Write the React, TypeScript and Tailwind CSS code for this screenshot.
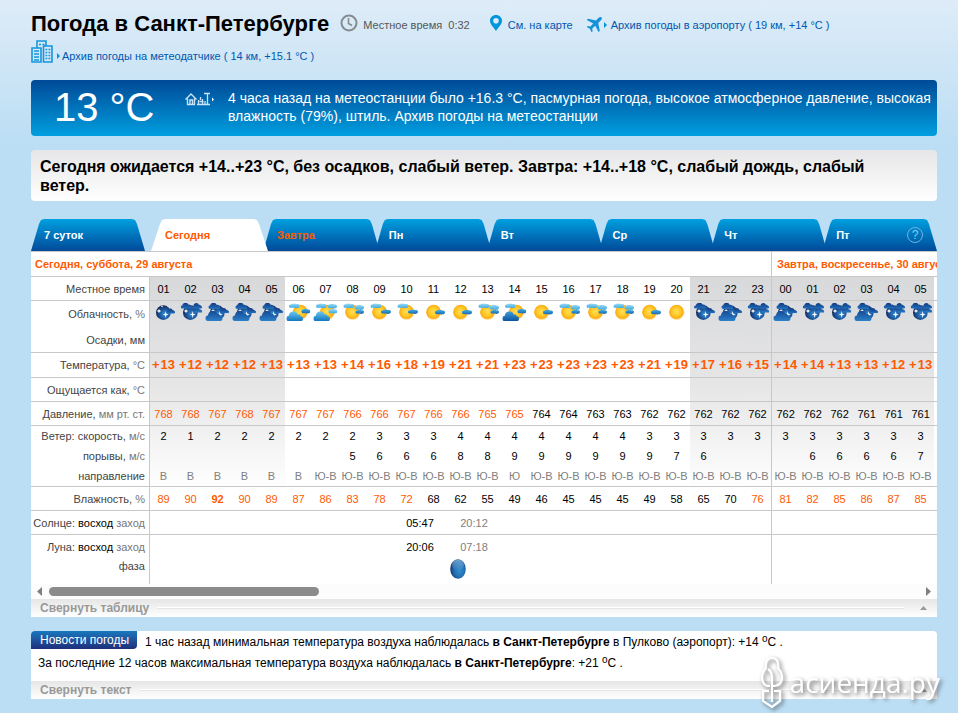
import { clsx } from 'clsx';

type Sky =
  | 'nightFew'
  | 'nightPartly'
  | 'nightCloudy'
  | 'nightHigh'
  | 'sun'
  | 'sunFew'
  | 'sunHigh'
  | 'sunPartly'
  | 'sunLow'
  | 'sunLowHigh'
  | 'sunDark';

interface Hour {
  hour: string;
  sky: Sky;
  temp: number;
  pressure: number;
  wind: number;
  gust?: number;
  dir: string;
  humidity: number;
}

const row = (
  hour: string,
  sky: Sky,
  temp: number,
  pressure: number,
  wind: number,
  gust: number | undefined,
  dir: string,
  humidity: number,
): Hour => ({ hour, sky, temp, pressure, wind, gust, dir, humidity });

const today: Hour[] = [
  row('01', 'nightFew', 13, 768, 2, undefined, 'В', 89),
  row('02', 'nightPartly', 12, 768, 1, undefined, 'В', 90),
  row('03', 'nightCloudy', 12, 767, 2, undefined, 'В', 92),
  row('04', 'nightCloudy', 12, 768, 2, undefined, 'В', 90),
  row('05', 'nightCloudy', 13, 767, 2, undefined, 'В', 89),
  row('06', 'sunLow', 13, 767, 2, undefined, 'В', 87),
  row('07', 'sunLowHigh', 13, 767, 2, undefined, 'Ю-В', 86),
  row('08', 'sunPartly', 14, 766, 2, 5, 'Ю-В', 83),
  row('09', 'sunHigh', 16, 766, 3, 6, 'Ю-В', 78),
  row('10', 'sunHigh', 18, 767, 3, 6, 'Ю-В', 72),
  row('11', 'sunFew', 19, 766, 3, 6, 'Ю-В', 68),
  row('12', 'sunFew', 21, 766, 4, 8, 'Ю-В', 62),
  row('13', 'sunPartly', 21, 765, 4, 8, 'Ю-В', 55),
  row('14', 'sunDark', 23, 765, 4, 9, 'Ю', 49),
  row('15', 'sunFew', 23, 764, 4, 9, 'Ю-В', 46),
  row('16', 'sunPartly', 23, 764, 4, 9, 'Ю-В', 45),
  row('17', 'sunPartly', 23, 763, 4, 9, 'Ю-В', 45),
  row('18', 'sunPartly', 23, 763, 4, 9, 'Ю-В', 45),
  row('19', 'sunFew', 21, 762, 3, 9, 'Ю-В', 49),
  row('20', 'sun', 19, 762, 3, 7, 'Ю-В', 58),
  row('21', 'nightHigh', 17, 762, 3, 6, 'Ю-В', 65),
  row('22', 'nightCloudy', 16, 762, 3, undefined, 'Ю-В', 70),
  row('23', 'nightPartly', 15, 762, 3, undefined, 'Ю-В', 76),
];

const tomorrow: Hour[] = [
  row('00', 'nightCloudy', 14, 762, 3, undefined, 'Ю-В', 81),
  row('01', 'nightPartly', 14, 762, 3, 6, 'Ю-В', 82),
  row('02', 'nightPartly', 13, 762, 3, 6, 'Ю-В', 85),
  row('03', 'nightCloudy', 13, 761, 3, 6, 'Ю-В', 86),
  row('04', 'nightPartly', 12, 761, 3, 6, 'Ю-В', 87),
  row('05', 'nightPartly', 13, 761, 3, 7, 'Ю-В', 85),
];

const hours = [...today, ...tomorrow];

const tabs = ['Завтра', 'Пн', 'Вт', 'Ср', 'Чт', 'Пт'];

const Cloud = ({ x, y, w, h, fill }: { x: number; y: number; w: number; h: number; fill: string }) => (
  <svg x={x} y={y} width={w} height={h} viewBox="0 0 60 30" preserveAspectRatio="none">
    <path
      d="M9 30C3 30 0 27 0 22c0-5 4-8 9-8C10 5 17 0 26 0c8 0 13 4 15 10 2-1 10-1 11 5 5 0 8 3 8 7 0 5-3 8-8 8z"
      fill={`url(#${fill})`}
    />
  </svg>
);

// Flat little cloud, almost a pill
const Wisp = ({ x, y, w, h, fill }: { x: number; y: number; w: number; h: number; fill: string }) => (
  <svg x={x} y={y} width={w} height={h} viewBox="0 0 60 30" preserveAspectRatio="none">
    <path
      d="M10 27C3 27 0 22 0 16 0 9 5 6 12 7 15 2 22 0 30 1c6 0 9 1 12 4 10-2 18 2 18 11 0 8-6 13-14 12-5 3-11 2-14-1z"
      fill={`url(#${fill})`}
    />
  </svg>
);

const SkyIcon = ({ sky }: { sky: Sky }) => {
  const night = sky.startsWith('night');
  const low = sky === 'sunLow' || sky === 'sunLowHigh' || sky === 'sunDark';
  return (
    <svg viewBox="0 0 81 60" className="mx-auto block h-5 w-[27px] overflow-hidden" role="img" aria-label={sky}>
      {night ? (
        <>
          <circle cx="40" cy="32" r="22" fill="url(#globe)" />
          <path
            d="M27 20l2 5 5 2-5 2-2 5-2-5-5-2 5-2zM36 9l1 3 3 1-3 1-1 3-1-3-3-1 3-1zM47 27l2 8 7 2.500-7 2.500-2 9-2-9-7-2.500 7-2.500z"
            fill="#fff"
          />
        </>
      ) : (
        <circle cx={low ? 46 : 41} cy="31" r="23" fill="url(#sunny)" />
      )}
      {sky === 'nightFew' && <Cloud x={50} y={19} w={25} h={16} fill="navy" />}
      {sky === 'nightPartly' && (
        <>
          <Cloud x={11} y={2} w={34} h={18} fill="navy" />
          <Cloud x={45} y={3} w={30} h={17} fill="navy" />
          <Cloud x={52} y={18} w={24} h={14} fill="steel" />
        </>
      )}
      {sky === 'nightHigh' && (
        <>
          <Cloud x={12} y={2} w={38} h={18} fill="navy" />
          <Cloud x={48} y={18} w={27} h={16} fill="navy" />
        </>
      )}
      {sky === 'nightCloudy' && (
        <>
          <Cloud x={13} y={2} w={36} h={19} fill="navy" />
          <Cloud x={48} y={18} w={27} h={16} fill="navy" />
          <Cloud x={4} y={26} w={52} h={31} fill="steel" />
        </>
      )}
      {sky === 'sunFew' && <Wisp x={45} y={23} w={30} h={15} fill="sea" />}
      {sky === 'sunHigh' && (
        <>
          <Wisp x={13} y={4} w={33} h={15} fill="pale" />
          <Wisp x={45} y={22} w={30} h={14} fill="sea" />
        </>
      )}
      {sky === 'sunPartly' && (
        <>
          <Wisp x={13} y={4} w={33} h={15} fill="pale" />
          <Wisp x={46} y={8} w={29} h={16} fill="pale" />
          <Wisp x={49} y={23} w={26} h={13} fill="sea" />
        </>
      )}
      {low && (
        <>
          <Wisp x={12} y={4} w={32} h={15} fill="pale" />
          {sky === 'sunLowHigh' && <Wisp x={46} y={5} w={29} h={15} fill="pale" />}
          <Wisp x={49} y={20} w={27} h={15} fill={sky === 'sunLowHigh' ? 'pale' : 'sea'} />
          <Cloud x={4} y={28} w={50} h={29} fill={sky === 'sunDark' ? 'deep' : 'blue'} />
        </>
      )}
    </svg>
  );
};

const IconDefs = () => (
  <svg className="absolute size-0" aria-hidden="true">
    <defs>
      <radialGradient id="sunny" cx="48%" cy="45%" r="52%">
        <stop offset="0" stopColor="#ffe05c" />
        <stop offset=".6" stopColor="#ffc51f" />
        <stop offset=".85" stopColor="#fbab1a" />
        <stop offset="1" stopColor="#ffe3a0" />
      </radialGradient>
      <radialGradient id="globe" cx="60%" cy="60%" r="60%">
        <stop offset="0" stopColor="#3a93d6" />
        <stop offset=".5" stopColor="#1f5ea6" />
        <stop offset="1" stopColor="#10275a" />
      </radialGradient>
      <radialGradient id="phase" cx="60%" cy="58%" r="62%">
        <stop offset="0" stopColor="#2f8fd0" />
        <stop offset=".5" stopColor="#2672b4" />
        <stop offset="1" stopColor="#12386f" />
      </radialGradient>
      <linearGradient id="phaseLight" x2="0" y2="1">
        <stop offset="0" stopColor="#8cc4ea" stopOpacity=".75" />
        <stop offset="1" stopColor="#8cc4ea" stopOpacity="0" />
      </linearGradient>
      <linearGradient id="navy" x2="0" y2="1">
        <stop offset="0" stopColor="#123c80" />
        <stop offset=".6" stopColor="#1a57a3" />
        <stop offset="1" stopColor="#2377c2" />
      </linearGradient>
      <linearGradient id="steel" x2="0" y2="1">
        <stop offset="0" stopColor="#174a90" />
        <stop offset=".5" stopColor="#2063ae" />
        <stop offset="1" stopColor="#2a80c8" />
      </linearGradient>
      <linearGradient id="blue" x2="0" y2="1">
        <stop offset="0" stopColor="#6cc9f0" />
        <stop offset="1" stopColor="#1376c0" />
      </linearGradient>
      <linearGradient id="sea" x2="0" y2="1">
        <stop offset="0" stopColor="#45b0e4" />
        <stop offset="1" stopColor="#1565af" />
      </linearGradient>
      <linearGradient id="deep" x2="0" y2="1">
        <stop offset="0" stopColor="#3fa0dc" />
        <stop offset="1" stopColor="#0b55a0" />
      </linearGradient>
      <linearGradient id="pale" x2="0" y2="1">
        <stop offset="0" stopColor="#9adcf6" />
        <stop offset="1" stopColor="#3aa5dd" />
      </linearGradient>
    </defs>
  </svg>
);

const Bullet = () => (
  <svg viewBox="0 0 3 6" className="h-1.5 w-[3px] shrink-0" aria-hidden="true">
    <path d="M0 0l3 3-3 3z" fill="#0096dc" />
  </svg>
);

const Header = () => (
  <header className="pt-2">
    <div className="flex h-[30px] items-center text-[11px] text-[#0058b0]">
      <h1 className="mr-[11px] whitespace-nowrap text-[22px] font-bold text-black">Погода в Санкт-Петербурге</h1>
      <svg viewBox="0 0 18 18" className="mr-[5px] size-[18px] shrink-0" fill="none" stroke="#868b90" aria-hidden="true">
        <circle cx="9" cy="9" r="7.5" strokeWidth="2" />
        <path d="M8.500 4v5.500l3.500 2" strokeWidth="1.600" />
      </svg>
      <span className="mt-1 whitespace-pre text-[#555]">Местное время  0:32</span>
      <a href="#map" className="ml-[19px] flex items-center whitespace-nowrap">
        <svg viewBox="0 0 14 18" className="mr-[5px] h-[18px] w-3.5" aria-hidden="true">
          <path
            d="M7 1C3.600 1 1 3.500 1 6.800 1 10.500 5 13.500 7 17c2-3.500 6-6.500 6-10.200C13 3.500 10.400 1 7 1zm0 3a2.800 2.800 0 1 1 0 5.600A2.800 2.800 0 0 1 7 4z"
            fill="#0095dc"
          />
        </svg>
        <span className="mt-1">См. на карте</span>
      </a>
      <a href="#airport" className="ml-[13px] flex items-center whitespace-nowrap">
        <svg viewBox="0 0 16 16" className="mt-1 mr-0.5 size-4" aria-hidden="true">
          <path
            d="M15.600.5c-.8-.8-2.200-.4-3.200.6L10 3.500 2 1.800.8 3l6.400 3.400L4.400 9.400l-2.600-.3-1 1 3 1.700 1.800 3.400 1-1-.3-2.700 3-2.800 3.200 6.300 1.300-1.200L12.200 6l2.500-2.400c1-1 1.600-2.300.9-3.100z"
            fill="#1593d8"
          />
        </svg>
        <span className="mt-1 flex items-center gap-1">
          <Bullet />
          Архив погоды в аэропорту ( 19 км, +14 °C )
        </span>
      </a>
    </div>
    <a href="#sensor" className="mt-0.5 flex h-6 w-fit items-end gap-1 text-[11px] leading-4 text-[#0058b0]">
      <svg viewBox="0 0 22 23" className="mb-px h-[23px] w-[22px]" fill="none" stroke="#1495dc" strokeWidth="1.600" aria-hidden="true">
        <path d="M1 22V8h9v14zM6 8V1h9v5M12.500 22V6H21v16z" />
        <path d="M3 11h5M3 14h5M3 17h5M3 20h5M14.500 9.500h1.800M17.500 9.500h1.800M14.500 12.500h1.800M17.500 12.500h1.800M14.500 15.500h1.800M17.500 15.500h1.800M14.500 18.500h1.800M17.500 18.500h1.800M8 4.500h2M11.500 4.500h2" />
      </svg>
      <span className="flex items-center gap-0.5">
        <Bullet />
        Архив погоды на метеодатчике ( 14 км, +15.1 °C )
      </span>
    </a>
  </header>
);

const CurrentWeather = () => (
  <section className="mt-4 flex h-14 items-start rounded bg-linear-to-b from-[#004a97] to-[#009fdf] text-white">
    <p className="w-[154px] shrink-0 pl-[23px] text-[40px] leading-[54px]">13 °C</p>
    <svg viewBox="0 0 30 14" className="mt-3 mr-[13px] h-3.5 w-[30px] shrink-0" fill="none" stroke="#c9e2f5" aria-hidden="true">
      <path d="M.5 7.500L6 2l5.500 5.500M2.500 6.500V12.500h7V6.500M5 12V8h2.500v4" strokeWidth="1.400" />
      <path d="M12 12.500h13M13.500 12V8M15.500 5v3M14.500 9.500h4M17.500 12V7M20 12V9M22.500 12V1.500M19 1.500h6" strokeWidth="1.300" />
      <path d="M27 5.500l2 2-2 2z" fill="#fff" stroke="none" />
    </svg>
    <p className="pt-[9px] text-[14px] leading-[18px]">
      4 часа назад на метеостанции было +16.3 °C, пасмурная погода, высокое атмосферное давление, высокая влажность (79%),
      штиль. <a href="#station">Архив погоды на метеостанции</a>
    </p>
  </section>
);

const Tabs = () => (
  <nav className="mt-[18px] flex h-8 text-[11px] font-bold text-white" role="tablist">
    <button
      role="tab"
      className="mr-1.5 w-[114px] bg-linear-to-b from-[#00a0e0] to-[#004a99] pl-[13px] text-left [clip-path:polygon(0_100%,8px_5px,10px_1px,13px_0,calc(100%-13px)_0,calc(100%-10px)_1px,calc(100%-8px)_5px,100%_100%)]"
    >
      7 суток
    </button>
    <button
      role="tab"
      aria-selected="true"
      className="z-10 -mr-[3px] w-[117px] bg-white pl-3.5 text-left text-[#ff5a00] [clip-path:polygon(0_100%,9px_5px,11px_1px,14px_0,calc(100%-14px)_0,calc(100%-11px)_1px,calc(100%-9px)_5px,100%_100%)]"
    >
      Сегодня
    </button>
    {tabs.map((tab, i) => (
      <button
        key={tab}
        role="tab"
        className={clsx(
          'flex flex-1 items-center justify-between bg-linear-to-b from-[#00a0e0] to-[#004a99] pr-3.5 pl-3',
          i === tabs.length - 1
            ? '[clip-path:polygon(0_100%,0_26px,6px_5px,8px_1px,11px_0,calc(100%-13px)_0,calc(100%-10px)_1px,calc(100%-8px)_5px,100%_100%)]'
            : '-mr-px [clip-path:polygon(0_100%,0_26px,6px_5px,8px_1px,11px_0,calc(100%-11px)_0,calc(100%-8px)_1px,calc(100%-6px)_5px,100%_26px,100%_100%)]',
          i === 0 && 'text-[#ff5a00]',
        )}
      >
        {tab}
        {i === tabs.length - 1 && (
          <span className="flex size-4 items-center justify-center rounded-full border border-[#6fb3e3] text-[12px] font-normal text-[#8fc6ee]">
            ?
          </span>
        )}
      </button>
    ))}
  </nav>
);

const isNight = (h: Hour) => h.sky.startsWith('night');
const line = 'border-b border-[#c8c8c8]';

const Label = ({ children, ruled = true }: { children: React.ReactNode; ruled?: boolean }) => (
  <th
    scope="row"
    className={clsx('border-r border-[#c8c8c8] bg-white pr-1 text-right font-normal whitespace-nowrap text-[#444]', ruled && 'border-b')}
  >
    {children}
  </th>
);

const Unit = ({ children }: { children: React.ReactNode }) => <span className="text-[#777]">{children}</span>;

interface HourCellsProps {
  render?: (h: Hour) => React.ReactNode;
  className?: (h: Hour) => string;
  ruled?: boolean;
}

const HourCells = ({ render, className, ruled = true }: HourCellsProps) => (
  <>
    {hours.map((h, i) => (
      <td
        key={i}
        className={clsx(
          'text-center whitespace-nowrap',
          ruled && line,
          i === today.length && 'border-l border-l-[#c8c8c8]',
          className?.(h),
        )}
      >
        {render?.(h)}
      </td>
    ))}
    <td className={clsx(ruled && line)} />
  </>
);

const ForecastTable = () => (
  <div className="overflow-hidden border-t border-[#c8c8c8] bg-white">
    <table className="w-full table-fixed border-separate border-spacing-0 text-[11px] leading-4 text-black">
      <colgroup>
        <col className="w-[119px]" />
        {hours.map((h, i) => (
          <col
            key={i}
            className={clsx(
              i === today.length ? 'w-7' : 'w-[27px]',
              isNight(h) && 'bg-linear-to-b from-[#d8d9db] from-8% via-[#e6e6e7] via-40% to-white to-72%',
            )}
          />
        ))}
        <col />
      </colgroup>
      <thead>
        <tr className="h-[25px] text-left whitespace-nowrap text-[#ff5a00]">
          <th colSpan={today.length + 1} className={clsx(line, 'bg-white pl-1')}>
            Сегодня, суббота, 29 августа
          </th>
          <th
            colSpan={tomorrow.length + 1}
            className={clsx(line, 'overflow-hidden border-l border-l-[#c8c8c8] bg-white pl-[5px]')}
          >
            Завтра, воскресенье, 30 августа
          </th>
        </tr>
      </thead>
      <tbody>
        <tr className="h-6">
          <Label>Местное время</Label>
          <HourCells render={(h) => h.hour} />
        </tr>
        <tr className="h-[26px]">
          <Label ruled={false}>
            Облачность, <Unit>%</Unit>
          </Label>
          <HourCells ruled={false} className={() => 'pt-px align-top'} render={(h) => <SkyIcon sky={h.sky} />} />
        </tr>
        <tr className="h-[26px]">
          <Label>Осадки, мм</Label>
          <HourCells />
        </tr>
        <tr className="h-[25px]">
          <Label>
            Температура, <Unit>°C</Unit>
          </Label>
          <HourCells
            className={() => 'text-[13px] font-bold text-[#ff5a00]'}
            render={(h) => (
              <>
                <span className="mr-px">+</span>
                {h.temp}
              </>
            )}
          />
        </tr>
        <tr className="h-6">
          <Label>
            Ощущается как, <Unit>°C</Unit>
          </Label>
          <HourCells />
        </tr>
        <tr className="h-6">
          <Label>
            Давление, <Unit>мм рт. ст.</Unit>
          </Label>
          <HourCells className={(h) => (h.pressure >= 765 ? 'text-[#ff5a00]' : '')} render={(h) => h.pressure} />
        </tr>
        <tr className="h-5">
          <Label ruled={false}>
            Ветер: скорость, <Unit>м/с</Unit>
          </Label>
          <HourCells ruled={false} render={(h) => h.wind} />
        </tr>
        <tr className="h-5">
          <Label ruled={false}>
            порывы, <Unit>м/с</Unit>
          </Label>
          <HourCells ruled={false} render={(h) => h.gust} />
        </tr>
        <tr className="h-[21px]">
          <Label>направление</Label>
          <HourCells className={() => 'text-[#808080]'} render={(h) => h.dir} />
        </tr>
        <tr className="h-6">
          <Label>
            Влажность, <Unit>%</Unit>
          </Label>
          <HourCells
            className={(h) => clsx(h.humidity > 70 && 'text-[#ff5a00]', h.humidity > 90 && 'font-bold')}
            render={(h) => h.humidity}
          />
        </tr>
        <tr className="h-6 text-center">
          <Label>
            Солнце: <span className="text-black">восход</span> <Unit>заход</Unit>
          </Label>
          <td colSpan={9} className={line} />
          <td colSpan={2} className={line}>
            05:47
          </td>
          <td colSpan={2} className={clsx(line, 'text-[#808080]')}>
            20:12
          </td>
          <td colSpan={10} className={line} />
          <td colSpan={7} className={clsx(line, 'border-l border-l-[#c8c8c8]')} />
        </tr>
        <tr className="h-6 text-center">
          <Label ruled={false}>
            Луна: <span className="text-black">восход</span> <Unit>заход</Unit>
          </Label>
          <td colSpan={9} />
          <td colSpan={2}>20:06</td>
          <td colSpan={2} className="text-[#808080]">
            07:18
          </td>
          <td colSpan={10} />
          <td colSpan={7} className="border-l border-[#c8c8c8]" />
        </tr>
        <tr className="h-[25px] align-top">
          <Label ruled={false}>
            <span className="block h-[25px] leading-[14px]">фаза</span>
          </Label>
          <td colSpan={today.length} className="pr-1.5">
            <svg viewBox="0 0 16 20" className="mx-auto h-5 w-4" role="img" aria-label="Фаза луны">
              <ellipse cx="8" cy="10" rx="7.800" ry="9.800" fill="url(#phase)" />
              <ellipse cx="8" cy="6" rx="6" ry="5.500" fill="url(#phaseLight)" />
            </svg>
          </td>
          <td colSpan={7} className="border-l border-[#c8c8c8]" />
        </tr>
      </tbody>
    </table>
  </div>
);

const ScrollBar = () => (
  <div className="flex h-[15px] items-center bg-[#fcfcfc] px-1.5">
    <button aria-label="Назад">
      <svg viewBox="0 0 5 9" className="h-[9px] w-[5px]">
        <path d="M5 0v9L0 4.500z" fill="#7f7f7f" />
      </svg>
    </button>
    <div className="mx-[7px] flex-1">
      <div className="h-[9px] w-[270px] rounded-full bg-[#8b8b8b]" />
    </div>
    <button aria-label="Вперёд">
      <svg viewBox="0 0 5 9" className="h-[9px] w-[5px]">
        <path d="M0 0v9l5-4.500z" fill="#7f7f7f" />
      </svg>
    </button>
  </div>
);

const CollapseBar = ({ text }: { text: string }) => (
  <button className="flex h-[18px] w-full items-center bg-linear-to-b from-[#e6e6e6] to-white pr-2.5 pl-[9px] text-[12px] font-bold text-[#999]">
    {text}
    <span className="mr-4 ml-2 h-0.5 flex-1 border-t border-white bg-[#e6e6e6]" />
    <svg viewBox="0 0 7 4" className="h-1 w-[7px]" aria-hidden="true">
      <path d="M0 4l3.500-4L7 4z" fill="#999" />
    </svg>
  </button>
);

const Degree = () => (
  <>
    <sup className="-top-1 text-[10px]">o</sup>C
  </>
);

const News = () => (
  <section className="mt-3.5 overflow-hidden rounded-t bg-white">
    <div className="flex h-[23px] items-start text-[12px]">
      <h2 className="mr-2 h-[18px] shrink-0 rounded-br bg-linear-to-b from-[#1778bd] to-[#1d2f7c] pr-2 pl-[9px] leading-[18px] text-white">
        Новости погоды
      </h2>
      <p className="leading-[23px] whitespace-nowrap text-black">
        1 час назад минимальная температура воздуха наблюдалась <b>в Санкт-Петербурге</b> в Пулково (аэропорт): +14 <Degree /> .
      </p>
    </div>
    <p className="h-[27px] pl-[7px] text-[12px] leading-[19px] text-black">
      За последние 12 часов максимальная температура воздуха наблюдалась <b>в Санкт-Петербурге</b>: +21 <Degree /> .
    </p>
    <CollapseBar text="Свернуть текст" />
  </section>
);

const Watermark = () => (
  <div className="pointer-events-none absolute top-[655px] right-[18px] flex items-center gap-1.5 text-white drop-shadow-[2px_2px_2px_rgba(0,0,0,0.55)]">
    <svg viewBox="0 0 23 53" className="h-[53px] w-[23px]" fill="none" stroke="#fff" strokeWidth="2.200" aria-hidden="true">
      <path d="M5 13C4 6 6 2 11 2s7 4 6 11M5 12c-4 4-5 10-3 14s4 4 7 4M17 12c4 4 5 10 3 14s-5 4-8 4M7 13c3 2 4 5 4 9M11 20v26M8 35H2v10l9 6 8-6V35h-6" />
    </svg>
    <span className="font-['Open_Sans','Noto_Sans',sans-serif] text-[28px] leading-[54px]">асиенда.ру</span>
  </div>
);

export default function App() {
  return (
    <div className="relative min-h-screen overflow-hidden bg-[#bcdef4] bg-[linear-gradient(#deecf8,#bcdef4_140px)] pr-[21px] pb-3.5 pl-[31px] font-['Liberation_Sans',Arial,sans-serif]">
      <IconDefs />
      <Header />
      <main>
        <CurrentWeather />
        <p className="mt-3.5 rounded bg-linear-to-b from-[#e6e6e8] to-white pt-[7px] pr-12 pb-1.5 pl-[9px] text-[16px] leading-[19px] font-bold text-black">
          Сегодня ожидается +14..+23 °C, без осадков, слабый ветер. Завтра: +14..+18 °C, слабый дождь, слабый ветер.
        </p>
        <Tabs />
        <ForecastTable />
        <ScrollBar />
        <CollapseBar text="Свернуть таблицу" />
        <News />
      </main>
      <Watermark />
    </div>
  );
}
